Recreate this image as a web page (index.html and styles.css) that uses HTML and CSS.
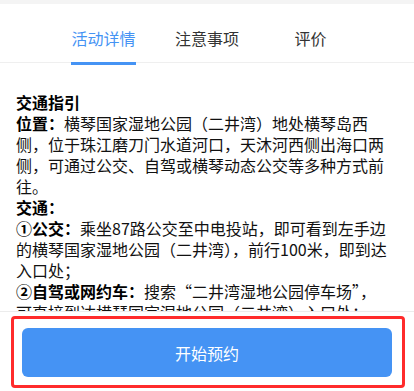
FILE: index.html
```html
<!DOCTYPE html>
<html lang="zh-CN">
<head>
<meta charset="utf-8">
<title>活动详情</title>
<link rel="stylesheet" href="styles.css">
</head>
<body>
<div class="page">
  <div class="topband"></div>
  <nav class="tabs">
    <div class="tab active"><span class="tab-label">活动详情</span></div>
    <div class="tab"><span class="tab-label">注意事项</span></div>
    <div class="tab"><span class="tab-label">评价</span></div>
  </nav>
  <section class="content">
    <p><strong>交通指引</strong><br><strong>位置：</strong>横琴国家湿地公园（二井湾）地处横琴岛西侧，位于珠江磨刀门水道河口，天沐河西侧出海口两侧，可通过公交、自驾或横琴动态公交等多种方式前往。<br><strong>交通：</strong><br><strong>①公交：</strong>乘坐87路公交至中电投站，即可看到左手边的横琴国家湿地公园（二井湾），前行100米，即到达入口处；<br><strong>②自驾或网约车：</strong>搜索“二井湾湿地公园停车场”，可直接到达横琴国家湿地公园（二井湾）入口处；<br>停车场位于入口处附近，车辆可停放后步行进入园区。</p>
  </section>
  <footer class="bottombar">
    <button class="book-btn" type="button">开始预约</button>
    <div class="highlight"></div>
  </footer>
</div>
</body>
</html>
```

FILE: styles.css
```css
html, body {
  margin: 0;
  padding: 0;
  background: #ffffff;
}

body {
  font-family: "Noto Sans CJK SC", "Microsoft YaHei", "Noto Sans", sans-serif;
  color: #111111;
  height: 391px;
  overflow: hidden;
}

.page {
  display: flex;
  flex-direction: column;
}

.topband {
  height: 4px;
  background: #f4f4f4;
}

.tabs {
  display: grid;
  grid-template-columns: repeat(3, 103.5px);
  justify-content: center;
  border-bottom: 1px solid #efefef;
  background: #ffffff;
}

.tab {
  display: flex;
  justify-content: center;
  padding: 22px 0 12px;
  font-size: 16px;
  line-height: 24px;
  color: #333333;
}

.tab-label {
  position: relative;
}

.tab.active {
  color: #4593f4;
}

.tab.active .tab-label::after {
  content: "";
  position: absolute;
  left: 0;
  right: 0;
  bottom: -15px;
  height: 3px;
  background: #4593f4;
}

.content {
  padding: 29px 25px 0 16px;
  font-size: 16px;
  line-height: 21px;
}

.content p {
  margin: 0;
}

.content strong {
  display: inline-block;
  line-height: 21px;
  font-weight: 700;
  color: #000000;
}

.bottombar {
  position: fixed;
  left: 0;
  right: 0;
  bottom: 0;
  height: 80px;
  box-sizing: border-box;
  padding: 16px 22px 0;
  background: #ffffff;
  border-top: 1px solid #ececec;
}

.book-btn {
  display: block;
  width: 100%;
  height: 49px;
  border: none;
  border-radius: 6px;
  background: #4593f4;
  color: #ffffff;
  font-family: "Noto Sans CJK SC", "Microsoft YaHei", sans-serif;
  font-size: 16px;
  padding: 0;
}

.highlight {
  position: absolute;
  left: 11px;
  top: 4px;
  width: 394px;
  height: 72px;
  box-sizing: border-box;
  border: 3px solid #ff2b2b;
  border-radius: 4px;
  pointer-events: none;
}
```
